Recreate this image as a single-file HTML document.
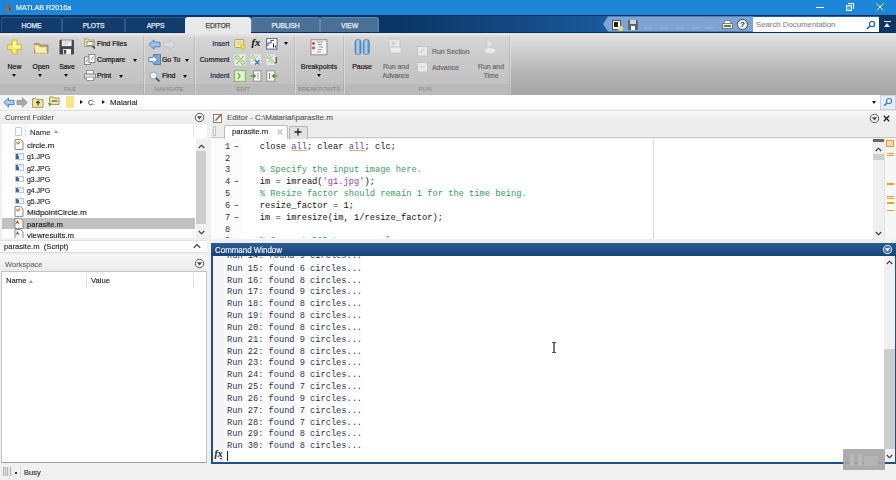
<!DOCTYPE html>
<html>
<head>
<meta charset="utf-8">
<title>MATLAB R2016a</title>
<style>
html,body{margin:0;padding:0;}
body{width:896px;height:480px;overflow:hidden;background:#f0f0f0;position:relative;font-family:"Liberation Sans",sans-serif;font-size:8px;color:#1a1a1a;}
div,span,svg{position:absolute;box-sizing:border-box;}
.t{white-space:nowrap;line-height:10px;-webkit-text-stroke:.12px currentColor;}
/* title */
#title{left:0;top:0;width:896px;height:16px;background:#1e86d9;}
#title .t{left:15.8px;top:2.8px;color:#fff;font-size:8px;transform:scaleX(.895);transform-origin:0 0;}
/* tab strip */
#tabs{left:0;top:15px;width:896px;height:18px;background:linear-gradient(90deg,#0b3565 0%,#0b3565 44%,#1a5a9c 68%,#2266aa 100%);border-top:1px solid #0a2f57;border-bottom:1px solid #0a2f57;}
.tab{top:1px;height:15px;border:1px solid #2e5886;border-bottom:none;border-radius:3px 3px 0 0;background:#113c6c;color:#e4ecf5;text-align:center;font-size:6.8px;line-height:15px;-webkit-text-stroke:.25px currentColor;letter-spacing:-.12px;}
.tab.lt{background:#4a7098;border-color:#6288ad;color:#e8eef5;}
.tab.act{background:#e9e9e9;border-color:#e9e9e9;color:#444;height:18px;}
/* toolstrip */
#strip{left:0;top:34px;width:896px;height:61px;background:linear-gradient(180deg,#e3e3e3 0%,#cfcfcf 25%,#b7b7b7 60%,#a4a4a4 100%);}
#stripL{left:0;top:0;width:510px;height:61px;background:linear-gradient(180deg,#e6e6e6 0%,#d6d6d6 6%,#cdcdcd 30%,#c2c2c2 80%,#bbbbbb 100%);}
#stripLab{left:0;top:50px;width:510px;height:11px;background:#bababa;}
.sep{top:2px;height:58px;background:rgba(150,150,150,.3);border-right:1px solid rgba(255,255,255,.45);width:2px;}
.sl{top:51px;color:#858585;font-size:5.95px;text-align:center;line-height:9px;}
.bl{font-size:6.9px;color:#111;-webkit-text-stroke:.2px currentColor;text-align:center;line-height:9.5px;}
.gr{color:#6a6a6a;}
.arr{width:0;height:0;border-left:2.9px solid transparent;border-right:2.9px solid transparent;border-top:3.4px solid #111;margin-left:-.4px;}
/* address bar */
#addr{left:0;top:95px;width:896px;height:16px;background:#f4f4f4;border-bottom:1px solid #e3e3e3;}
#addrf{left:62px;top:0;width:818px;height:14px;background:#fff;}
/* panels */
.ph{background:linear-gradient(180deg,#f7f7f7,#ebebeb);color:#555;font-size:7.6px;}
.code{font-family:"Liberation Mono",monospace;font-size:8.67px;white-space:pre;line-height:11.85px;}
.fn{font-size:8px;color:#111;margin-top:.9px;}
.img{left:15px;width:8.5px;height:6.5px;background:linear-gradient(90deg,#3d6486 0%,#4a7396 45%,#eef2f6 46%,#fff 100%);border:1px solid #b9c7d6;}
.img:after{content:"";position:absolute;left:2px;top:0;width:4.5px;height:1.5px;background:#e4ebf2;}
.om{left:887px;width:7px;height:1px;background:#f0a020;}
</style>
</head>
<body>

<!-- title bar -->
<div id="title">
  <svg style="left:4.2px;top:2.6px" width="7.4" height="9.6" viewBox="0 0 9 10" preserveAspectRatio="none"><path d="M0.3 6.5 L3 5 L5.2 0.6 L8.6 8.8 L6.2 6.8 L4.2 9.3 L2.6 7.2 Z" fill="#d9541e"/><path d="M5.2 0.6 L8.6 8.8 L6.4 6.6 Z" fill="#8a1c10"/><path d="M0.3 6.5 L3 5 L3.8 6 L2.6 7.2 Z" fill="#4a7fc0"/></svg>
  <div class="t">MATLAB R2016a</div>
  <div style="left:816px;top:7px;width:8px;height:1px;background:#fff"></div>
  <div style="left:846px;top:5px;width:6px;height:6px;border:1px solid #fff;background:#5aa6e4"></div>
  <div style="left:848px;top:3px;width:6px;height:6px;border-top:1px solid #fff;border-right:1px solid #fff"></div>
  <svg style="left:875.5px;top:3px" width="8" height="8" viewBox="0 0 8 8"><path d="M0.5 0.5 L7.5 7.5 M7.5 0.5 L0.5 7.5" stroke="#fff" stroke-width="1"/></svg>
</div>

<!-- tab strip -->
<div id="tabs">
  <div class="tab" style="left:1px;width:61px">HOME</div>
  <div class="tab" style="left:62px;width:63px">PLOTS</div>
  <div class="tab" style="left:125px;width:61px">APPS</div>
  <div class="tab act" style="left:185px;width:66px">EDITOR</div>
  <div class="tab lt" style="left:251px;width:69px">PUBLISH</div>
  <div class="tab lt" style="left:320px;width:59px">VIEW</div>
  <!-- quick access -->
  <svg style="left:603px;top:0" width="150" height="16" viewBox="0 0 150 16"><path d="M0 8 L5 0.5 L150 0.5 L150 15.5 L5 15.5 Z" fill="#7fa4d1"/></svg>
  <div style="left:612px;top:4px;width:9px;height:10px;background:#fff;border:1px solid #555"></div>
  <div style="left:614px;top:6px;width:4px;height:5px;background:#222"></div>
  <div style="left:618px;top:10px;width:5px;height:5px;border-radius:3px;background:#e8e070"></div>
  <div style="left:628px;top:4px;width:10px;height:10px;background:#5d6470;border-radius:1px"></div>
  <div style="left:630px;top:4px;width:6px;height:4px;background:#c9d3e0"></div>
  <div style="left:631px;top:10px;width:4px;height:4px;background:#fff"></div>
  <div style="left:644px;top:11px;width:8px;height:2px;background:#92b0d6"></div>
  <div style="left:660px;top:11px;width:8px;height:2px;background:#92b0d6"></div>
  <div style="left:676px;top:11px;width:8px;height:2px;background:#92b0d6"></div>
  <div style="left:692px;top:11px;width:8px;height:2px;background:#92b0d6"></div>
  <div style="left:706px;top:11px;width:8px;height:2px;background:#92b0d6"></div>
  <div style="left:722px;top:7px;width:11px;height:6px;background:#f2f2f2;border:1px solid #777"></div>
  <div style="left:724px;top:4px;width:7px;height:4px;background:#fff;border:1px solid #888"></div>
  <div style="left:724px;top:9px;width:7px;height:2px;background:#4c8a4c"></div>
  <div style="left:737px;top:3px;width:11px;height:11px;border-radius:6px;background:#f4f6f8;border:1px solid #3a4a5c;color:#223;font-size:8px;font-weight:bold;line-height:9.5px;text-align:center">?</div>
  <!-- search -->
  <div style="left:753px;top:1px;width:126px;height:15px;background:#fff"></div>
  <div class="t" style="left:756px;top:3.5px;color:#8a8a8a;font-size:7.8px">Search Documentation</div>
  <svg style="left:866px;top:4px" width="10" height="10" viewBox="0 0 10 10"><circle cx="6" cy="4" r="2.6" fill="none" stroke="#2b66a8" stroke-width="1.3"/><path d="M4 6 L1 9" stroke="#2b66a8" stroke-width="1.6"/></svg>
  <div style="left:879px;top:0;width:17px;height:16px;background:#0f3560"></div>
  <div style="left:884px;top:5px;width:7px;height:1px;background:#dfe7f0"></div>
  <div style="left:884px;top:7px;width:0;height:0;border-left:3.5px solid transparent;border-right:3.5px solid transparent;border-bottom:4px solid #dfe7f0"></div>
</div>

<!-- toolstrip -->
<div style="left:0;top:33px;width:896px;height:2px;background:#e6e6e6"></div>
<div id="strip">
  <div id="stripL"></div>
  <div id="stripLab"></div>
  <div class="sep" style="left:143px"></div>
  <div class="sep" style="left:194px"></div>
  <div class="sep" style="left:294px"></div>
  <div class="sep" style="left:343px"></div>
  <div class="sep" style="left:509px"></div>
  <div class="sl" style="left:50px;width:40px">FILE</div>
  <div class="sl" style="left:144px;width:50px">NAVIGATE</div>
  <div class="sl" style="left:223px;width:40px">EDIT</div>
  <div class="sl" style="left:295px;width:48px">BREAKPOINTS</div>
  <div class="sl" style="left:405px;width:40px">RUN</div>

  <!-- FILE -->
  <svg style="left:6px;top:5px" width="17" height="16" viewBox="0 0 17 16"><path d="M6 1 H11 V5.7 H15.6 V10.6 H11 V15 H6 V10.6 H1.4 V5.7 H6 Z" fill="#f3e868" stroke="#cdb93c" stroke-width="1" stroke-linejoin="round"/><path d="M7 2.2 H10 V6.8 H14.5 V8.6 H7 Z" fill="#fdf9b8"/></svg>
  <svg style="left:33px;top:8px" width="16" height="12" viewBox="0 0 16 12"><path d="M1.5 1.5 H6 L7.3 3 H15 V11 H1.5 Z" fill="#b9a056" stroke="#a08a44" stroke-width=".8"/><path d="M1.2 3.2 H5.5 L6.8 5 H13.3 L14 11.2 H2.6 Z" fill="#f6eeb4" stroke="#d6c478" stroke-width=".7"/></svg>
  <svg style="left:58px;top:5px" width="17" height="16" viewBox="0 0 17 16"><rect x="1.5" y="0.8" width="14.5" height="14.7" rx="1" fill="#46484d"/><rect x="3.8" y="1.3" width="9.8" height="5.8" fill="#f1f3f5"/><path d="M5 3 H12 M5 5 H10" stroke="#b9bec6" stroke-width=".8"/><rect x="5" y="10" width="8" height="5.5" fill="#fafafa"/><rect x="5.8" y="10.8" width="2.4" height="4" fill="#46484d"/></svg>
  <div class="bl" style="left:0;top:27.5px;width:29px">New</div>
  <div class="bl" style="left:26px;top:27.5px;width:30px">Open</div>
  <div class="bl" style="left:52px;top:27.5px;width:30px">Save</div>
  <div class="arr" style="left:12px;top:40px"></div>
  <div class="arr" style="left:38.5px;top:40px"></div>
  <div class="arr" style="left:64.5px;top:40px"></div>

  <svg style="left:84px;top:4px" width="12" height="11" viewBox="0 0 12 11"><path d="M0.5 1 H4 L5 2 H10.5 V8.5 H0.5 Z" fill="#efe3a0" stroke="#b9a55a"/><rect x="3" y="3.5" width="6" height="4" fill="#fff" stroke="#5a7fb0" stroke-width=".8"/><path d="M8.5 8 L11 10.5" stroke="#334" stroke-width="1.4"/></svg>
  <svg style="left:84px;top:20px" width="12" height="11" viewBox="0 0 12 11"><rect x="0.5" y="3" width="6" height="7.5" fill="#f4f4f4" stroke="#888"/><rect x="5" y="0.5" width="6" height="8" fill="#fff" stroke="#888"/><path d="M2 8 L4.5 4.5 M7 6 L9.5 2.5" stroke="#7090c0" stroke-width="1"/></svg>
  <svg style="left:84px;top:36px" width="12" height="11" viewBox="0 0 12 11"><rect x="2.5" y="0.5" width="7" height="4" fill="#fff" stroke="#999"/><rect x="0.5" y="4" width="11" height="4.5" rx="1" fill="#e6e6e6" stroke="#777"/><rect x="2.5" y="7" width="7" height="3.5" fill="#fff" stroke="#999"/></svg>
  <div class="t bl" style="left:97px;top:5px;text-align:left">Find Files</div>
  <div class="t bl" style="left:97px;top:21px;text-align:left">Compare</div>
  <div class="t bl" style="left:97px;top:37px;text-align:left">Print</div>
  <div class="arr" style="left:133.3px;top:24.5px"></div>
  <div class="arr" style="left:119.2px;top:40.5px"></div>

  <!-- NAVIGATE -->
  <svg style="left:148px;top:5px" width="13" height="11" viewBox="0 0 13 11"><path d="M1 5.5 L6 0.8 V3.2 H12 V7.8 H6 V10.2 Z" fill="#9cc4ea" stroke="#4f86c0" stroke-width="1" stroke-linejoin="round"/></svg>
  <svg style="left:163px;top:5px" width="13" height="11" viewBox="0 0 13 11"><path d="M12 5.5 L7 0.8 V3.2 H1 V7.8 H7 V10.2 Z" fill="#dcdcdc" stroke="#c2c2c2" stroke-width="1" stroke-linejoin="round"/></svg>
  <svg style="left:148px;top:20px" width="13" height="11" viewBox="0 0 13 11"><rect x="6" y="0.5" width="6.5" height="10" fill="#7fa6d4" stroke="#4a6f9c" stroke-width=".8"/><path d="M0.8 3.5 H5 V1.5 L9.5 5.5 L5 9.5 V7.5 H0.8 Z" fill="#eaf2fb" stroke="#4f86c0" stroke-width=".9" stroke-linejoin="round"/></svg>
  <svg style="left:149px;top:37px" width="12" height="11" viewBox="0 0 12 11"><circle cx="4.5" cy="4.5" r="3.5" fill="#eef5fc" stroke="#8aa2be" stroke-width="1"/><path d="M7 7 L10.5 10.3" stroke="#445a78" stroke-width="1.8"/></svg>
  <div class="t bl" style="left:162px;top:21px;text-align:left">Go To</div>
  <div class="t bl" style="left:162px;top:37px;text-align:left">Find</div>
  <div class="arr" style="left:185.7px;top:24.5px"></div>
  <div class="arr" style="left:183.7px;top:40.5px"></div>

  <!-- EDIT -->
  <div class="t bl" style="left:190px;top:5px;width:39.5px;text-align:right;color:#1d2d55">Insert</div>
  <div class="t bl" style="left:190px;top:21px;width:39.5px;text-align:right;color:#1a1a1a">Comment</div>
  <div class="t bl" style="left:190px;top:37px;width:39.5px;text-align:right;color:#1d2d55">Indent</div>
  <svg style="left:234px;top:4px" width="12" height="12" viewBox="0 0 12 12"><rect x="0.7" y="1.5" width="9" height="8" rx="1" fill="#f2eab0" stroke="#b5a65a" stroke-width="1"/><path d="M2.5 4 H8 M2.5 6 H8" stroke="#c9bd7a" stroke-width=".8"/><circle cx="9" cy="9" r="2.3" fill="#f0dc4a" stroke="#c4ac2a" stroke-width=".6"/></svg>
  <div class="t" style="left:251.5px;top:3px;font-family:'Liberation Serif',serif;font-style:italic;font-weight:bold;font-size:10.5px;color:#111;line-height:12px">fx</div>
  <svg style="left:266px;top:4px" width="12" height="12" viewBox="0 0 12 12"><rect x="0.6" y="0.6" width="10.5" height="10.5" fill="#fdfdfd" stroke="#5a6a82" stroke-width="1"/><path d="M2 8 L2 5 L5 5 L5 2.5 L8 2.5" stroke="#3c66a6" stroke-width="1.2" fill="none"/><path d="M7.5 5.5 V9.5 M9.5 7.5 V9.5" stroke="#222" stroke-width="1"/></svg>
  <div class="arr" style="left:284px;top:8px"></div>
  <svg style="left:234px;top:20px" width="12" height="12" viewBox="0 0 12 12"><rect x="0.5" y="0.5" width="11" height="11" fill="#eef6e6" opacity=".85"/><path d="M9.5 2 L2.5 10" stroke="#7cb84a" stroke-width="1.1"/><circle cx="3.3" cy="3.5" r="1.8" fill="none" stroke="#7cb84a" stroke-width="1"/><circle cx="8.7" cy="8.5" r="1.8" fill="none" stroke="#7cb84a" stroke-width="1"/></svg>
  <svg style="left:250px;top:20px" width="12" height="12" viewBox="0 0 12 12"><rect x="0.5" y="0.5" width="10" height="10" fill="#f0f5ec" opacity=".8"/><path d="M8 1.5 L2.5 8" stroke="#9cc87a" stroke-width="1"/><circle cx="3" cy="3" r="1.5" fill="none" stroke="#9cc87a" stroke-width="1"/><path d="M5 6 L9.5 10.5 M9.5 6 L5 10.5" stroke="#3b78b8" stroke-width="1.5"/></svg>
  <svg style="left:266px;top:20px" width="12" height="12" viewBox="0 0 12 12"><rect x="0.5" y="0.5" width="8.5" height="10.5" fill="#f0f5ec" opacity=".8"/><path d="M7 1.5 L2 8.5" stroke="#9cc87a" stroke-width="1"/><circle cx="2.8" cy="3" r="1.5" fill="none" stroke="#9cc87a" stroke-width="1"/><circle cx="6.2" cy="7.5" r="1.5" fill="none" stroke="#9cc87a" stroke-width="1"/><path d="M10.3 3 V9 H8.5" stroke="#444" stroke-width="1" fill="none"/></svg>
  <svg style="left:234px;top:36px" width="12" height="12" viewBox="0 0 12 12"><rect x="0.6" y="0.6" width="10.8" height="10.8" fill="#e2f2d4" stroke="#86bc5a" stroke-width="1.1"/><path d="M3.8 3 L6 6 L3.8 9" stroke="#5aa434" stroke-width="1.2" fill="none"/></svg>
  <svg style="left:250px;top:36px" width="12" height="12" viewBox="0 0 12 12"><rect x="3.5" y="0.8" width="7.5" height="10.4" fill="#f6f6f6" stroke="#8a8a8a" stroke-width=".9"/><path d="M0.5 6 H5 M3.2 4 L5.4 6 L3.2 8" stroke="#5aa22e" stroke-width="1.3" fill="none"/><path d="M8 3 V9" stroke="#777" stroke-width="1" stroke-dasharray="1.5 1"/></svg>
  <svg style="left:266px;top:36px" width="12" height="12" viewBox="0 0 12 12"><rect x="0.8" y="0.8" width="8" height="10.4" fill="#f6f6f6" stroke="#8a8a8a" stroke-width=".9"/><path d="M11.5 6 H6.5 M8.6 4 L6.4 6 L8.6 8" stroke="#5aa22e" stroke-width="1.3" fill="none"/><path d="M3.5 3 V9" stroke="#777" stroke-width="1"/></svg>

  <!-- BREAKPOINTS -->
  <svg style="left:310px;top:5px" width="18" height="17" viewBox="0 0 18 17"><rect x="1" y="0.8" width="16" height="15" fill="#f4f4f4" stroke="#8d8d8d" stroke-width="1"/><circle cx="3.5" cy="4.5" r="1.4" fill="#d43a3a"/><circle cx="3.5" cy="9" r="1.4" fill="#d43a3a"/><path d="M7 3 H13 M8 5.5 H12 M9 8 H13 M8 10.5 H12 M7 13 H11" stroke="#9a9a9a" stroke-width="1"/></svg>
  <div class="bl" style="left:295px;top:27.5px;width:48px;color:#1c2410">Breakpoints</div>
  <div class="arr" style="left:317px;top:40px"></div>

  <!-- RUN -->
  <svg style="left:354px;top:5px" width="16" height="16" viewBox="0 0 16 16"><defs><linearGradient id="pg" x1="0" x2="1" y1="0" y2="0"><stop offset="0" stop-color="#3f84c0"/><stop offset=".45" stop-color="#bcdcf4"/><stop offset="1" stop-color="#3d7cb6"/></linearGradient></defs><rect x="1" y="0.5" width="6" height="15" rx="2.5" fill="url(#pg)" stroke="#4a7fae" stroke-width=".7"/><rect x="9.3" y="0.5" width="6" height="15" rx="2.5" fill="url(#pg)" stroke="#4a7fae" stroke-width=".7"/></svg>
  <div class="bl" style="left:344px;top:27.5px;width:36px;color:#1f1410">Pause</div>

  <svg style="left:387px;top:4px" width="16" height="17" viewBox="0 0 16 17"><rect x="2" y="1" width="11" height="9" fill="#e6e6e6" stroke="#c6c6c6"/><rect x="3" y="9" width="11" height="6" fill="#ececec" stroke="#c6c6c6"/><path d="M5 3 L9 5.5 L5 8 Z" fill="#cfcfcf"/></svg>
  <div class="bl gr" style="left:376px;top:27.5px;width:40px">Run and<br>Advance</div>
  <svg style="left:417px;top:12px" width="12" height="11" viewBox="0 0 12 11"><rect x="0.5" y="0.5" width="10" height="9.5" fill="#e9e9e9" stroke="#c2c2c2"/><path d="M3 7 L7 3" stroke="#cfcfcf" stroke-width="1.2"/></svg>
  <svg style="left:417px;top:28px" width="12" height="11" viewBox="0 0 12 11"><rect x="0.5" y="0.5" width="10" height="9.5" fill="#e9e9e9" stroke="#c2c2c2"/><path d="M3 5 H8" stroke="#cfcfcf" stroke-width="1.2"/></svg>
  <div class="t bl gr" style="left:432px;top:12.5px;text-align:left">Run Section</div>
  <div class="t bl gr" style="left:432px;top:28.5px;text-align:left">Advance</div>
  <svg style="left:482px;top:4px" width="16" height="17" viewBox="0 0 16 17"><path d="M5 1 L12 6 L5 11 Z" fill="#e2e2e2" stroke="#cbcbcb"/><ellipse cx="8" cy="12.5" rx="6" ry="3.2" fill="#e9e9e9" stroke="#cdcdcd"/></svg>
  <div class="bl gr" style="left:471px;top:27.5px;width:40px">Run and<br>Time</div>
</div>

<!-- address bar -->
<div id="addr">
  <div id="addrf"></div>
  <svg style="left:3px;top:2px" width="12" height="11" viewBox="0 0 12 11"><path d="M0.8 5.5 L5.5 1 V3.4 H11 V7.6 H5.5 V10 Z" fill="#a4cbee" stroke="#4f86c0" stroke-width="1" stroke-linejoin="round"/></svg>
  <svg style="left:16px;top:2px" width="12" height="11" viewBox="0 0 12 11"><path d="M11.2 5.5 L6.5 1 V3.4 H1 V7.6 H6.5 V10 Z" fill="#a8a8a8" stroke="#9a9a9a" stroke-width="1" stroke-linejoin="round"/></svg>
  <svg style="left:32px;top:2px" width="12" height="11" viewBox="0 0 12 11"><path d="M0.6 1.5 H4 L5 2.6 H11 V10.3 H0.6 Z" fill="#efe6a8" stroke="#a89a50" stroke-width="1"/><path d="M6 8.5 V4.5 M4.3 6 L6 4.3 L7.7 6" stroke="#333" stroke-width="1.1" fill="none"/></svg>
  <svg style="left:47px;top:1px" width="13" height="12" viewBox="0 0 13 12"><path d="M2.5 1 H6 L7 2 H12 V8.5 H2.5 Z" fill="#efe6a8" stroke="#a89a50" stroke-width="1"/><path d="M4.5 5 H10.5" stroke="#444" stroke-width="1"/><path d="M0.8 7 L2.8 10.6 L5 7.6 Z" fill="#5aa832"/></svg>
  <div style="left:66px;top:1px;width:8px;height:12px;background:#f6e68a;border-radius:1px"></div>
  <div style="left:79.5px;top:5px;width:0;height:0;border-top:2.5px solid transparent;border-bottom:2.5px solid transparent;border-left:3px solid #111"></div>
  <div class="t" style="left:88px;top:2.5px;font-size:8px;color:#2a3560;transform:scaleX(0.870);transform-origin:0 50%">C:</div>
  <div style="left:101.5px;top:5px;width:0;height:0;border-top:2.5px solid transparent;border-bottom:2.5px solid transparent;border-left:3px solid #111"></div>
  <div class="t" style="left:110px;top:2.5px;font-size:8px;color:#222;transform:scaleX(0.983);transform-origin:0 50%">Malarial</div>
  <div class="arr" style="left:872px;top:6px"></div>
  <div style="left:880px;top:0;width:16px;height:15px;background:#e4ecf6;border:1px solid #c5d3e6"></div>
  <svg style="left:883px;top:2px" width="10" height="10" viewBox="0 0 10 10"><circle cx="6" cy="4" r="2.5" fill="#fff" stroke="#3f78ba" stroke-width="1.2"/><path d="M4 6 L1.2 8.8" stroke="#3f78ba" stroke-width="1.6"/></svg>
</div>

<!-- LEFT: Current Folder -->
<div id="cf" style="left:0;top:111px;width:210px;height:129px;background:#f0f0f0">
  <div class="ph" style="left:1px;top:0;width:208px;height:13px"></div>
  <div class="t" style="left:5px;top:2.2px;font-size:8px;color:#505050;transform:scaleX(0.950);transform-origin:0 50%">Current Folder</div>
  <svg style="left:193.5px;top:0.8px" width="11" height="11" viewBox="0 0 11 11"><circle cx="5.5" cy="5.5" r="4.2" fill="none" stroke="#5c5c5c" stroke-width="1"/><path d="M2.9 4.2 H8.1 L5.5 7.6 Z" fill="#4a4a4a"/></svg>
  
  <!-- list -->
  <div style="left:2px;top:13px;width:205px;height:114px;background:#fff"></div>
  <div style="left:25px;top:14px;width:1px;height:12px;background:#e6e6e6"></div>
  <div style="left:193px;top:14px;width:1px;height:12px;background:#e6e6e6"></div>
  <div style="left:15px;top:16px;width:7px;height:9px;background:#fff;border:1px solid #c9c9c9;border-radius:1px"></div>
  <div class="t" style="left:30px;top:16.5px;font-size:8px;color:#1c3a20;transform:scaleX(0.965);transform-origin:0 50%">Name</div>
  <div style="left:53.5px;top:19px;width:0;height:0;border-left:2.5px solid transparent;border-right:2.5px solid transparent;border-bottom:3px solid #999"></div>
  <div style="left:2px;top:107.3px;width:193px;height:10.8px;background:#c1c1c1"></div>
  <!-- scrollbar -->
  <div style="left:196px;top:28px;width:10.5px;height:99px;background:#f0f0f0"></div>
  <div style="left:196px;top:40px;width:10px;height:72.5px;background:#cdcdcd"></div>
  <svg style="left:198px;top:33px" width="7" height="5" viewBox="0 0 7 5"><path d="M0.8 4 L3.5 1.2 L6.2 4" stroke="#333" stroke-width="1.1" fill="none"/></svg>
  <svg style="left:198px;top:119px" width="7" height="5" viewBox="0 0 7 5"><path d="M0.8 1 L3.5 3.8 L6.2 1" stroke="#333" stroke-width="1.1" fill="none"/></svg>
</div>
<div id="files" style="left:0;top:111px;width:200px;height:127px;overflow:hidden">
  <!-- icons + names -->
  <svg style="left:14px;top:28px" width="10" height="11" viewBox="0 0 10 11"><path d="M1 0.6 H6.5 L9 3 V10.4 H1 Z" fill="#fff" stroke="#7a7a7a" stroke-width=".9"/><path d="M2.5 3 L4 5 L6 2.5" stroke="#d66a1e" stroke-width="1.2" fill="none"/></svg>
  <div class="t fn" style="left:27px;top:29px;transform:scaleX(0.990);transform-origin:0 50%">circle.m</div>
  <div class="img" style="top:42px"></div><div class="t fn" style="left:27px;top:40.5px;transform:scaleX(0.865);transform-origin:0 50%">g1.JPG</div>
  <div class="img" style="top:53px"></div><div class="t fn" style="left:27px;top:52px;transform:scaleX(0.865);transform-origin:0 50%">g2.JPG</div>
  <div class="img" style="top:64.5px"></div><div class="t fn" style="left:27px;top:63px;transform:scaleX(0.865);transform-origin:0 50%">g3.JPG</div>
  <div class="img" style="top:75.5px"></div><div class="t fn" style="left:27px;top:74px;transform:scaleX(0.865);transform-origin:0 50%">g4.JPG</div>
  <div class="img" style="top:86.5px"></div><div class="t fn" style="left:27px;top:85px;transform:scaleX(0.865);transform-origin:0 50%">g5.JPG</div>
  <svg style="left:14px;top:95px" width="10" height="11" viewBox="0 0 10 11"><path d="M1 0.6 H6.5 L9 3 V10.4 H1 Z" fill="#fff" stroke="#7a7a7a" stroke-width=".9"/><path d="M2.5 3 L4 5 L6 2.5" stroke="#d66a1e" stroke-width="1.2" fill="none"/></svg>
  <div class="t fn" style="left:27px;top:96.5px;transform:scaleX(1.000);transform-origin:0 50%">MidpointCircle.m</div>
  <svg style="left:14px;top:107px" width="10" height="11" viewBox="0 0 10 11"><path d="M1 0.6 H6.5 L9 3 V10.4 H1 Z" fill="#fff" stroke="#7a7a7a" stroke-width=".9"/><path d="M1.5 6 L3.5 2 L5.5 6.5 L3.5 5 Z" fill="#c43a1e"/></svg>
  <div class="t fn" style="left:27px;top:108px;transform:scaleX(0.965);transform-origin:0 50%">parasite.m</div>
  <svg style="left:14px;top:118px" width="10" height="11" viewBox="0 0 10 11"><path d="M1 0.6 H6.5 L9 3 V10.4 H1 Z" fill="#fff" stroke="#7a7a7a" stroke-width=".9"/><path d="M1.5 6 L3.5 2 L5.5 6.5 L3.5 5 Z" fill="#c43a1e"/></svg>
  <div class="t fn" style="left:27px;top:119.5px;transform:scaleX(0.970);transform-origin:0 50%">viewresults.m</div>
</div>

<!-- details -->
<div style="left:0;top:240px;width:207px;height:13px;background:#fff;border-top:1px solid #e2e2e2;border-bottom:1px solid #dcdcdc"></div>
<div class="t" style="left:4px;top:241.6px;font-size:8px;color:#1a1a1a;transform:scaleX(0.953);transform-origin:0 50%">parasite.m&nbsp; (Script)</div>
<svg style="left:192.6px;top:243px" width="8" height="6" viewBox="0 0 8 6"><path d="M0.8 4.8 L4 1.5 L7.2 4.8" stroke="#333" stroke-width="1.2" fill="none"/></svg>

<!-- workspace -->
<div class="ph" style="left:1px;top:255px;width:206px;height:16px"></div>
<div class="t" style="left:5px;top:260px;font-size:8px;color:#666;transform:scaleX(0.942);transform-origin:0 50%">Workspace</div>
<svg style="left:193.5px;top:258.3px" width="11" height="11" viewBox="0 0 11 11"><circle cx="5.5" cy="5.5" r="4.2" fill="none" stroke="#5c5c5c" stroke-width="1"/><path d="M2.9 4.2 H8.1 L5.5 7.6 Z" fill="#4a4a4a"/></svg>

<div style="left:1px;top:270.6px;width:206px;height:192px;background:#fff;border:1px solid #c4c4c4;border-bottom-color:#9c9c9c"></div>
<div style="left:86px;top:273px;width:1px;height:15px;background:#e2e2e2"></div>
<div style="left:193px;top:273px;width:1px;height:15px;background:#e2e2e2"></div>
<div class="t" style="left:5.5px;top:276px;font-size:8px;color:#222;transform:scaleX(0.965);transform-origin:0 50%">Name</div>
<div style="left:29px;top:279.5px;width:0;height:0;border-left:2.5px solid transparent;border-right:2.5px solid transparent;border-bottom:3px solid #999"></div>
<div class="t" style="left:90.5px;top:276px;font-size:8px;color:#222;transform:scaleX(0.957);transform-origin:0 50%">Value</div>

<!-- status bar -->
<div style="left:0;top:463px;width:896px;height:17px;background:#f0f0f0"></div>
<div style="left:3px;top:467px;width:9px;height:9px;background:repeating-linear-gradient(90deg,#b5b5b5 0,#b5b5b5 1px,#e6e6e6 1px,#e6e6e6 2.2px)"></div>
<div style="left:15px;top:472px;width:2px;height:2px;background:#333"></div>
<div style="left:20px;top:466px;width:1px;height:12px;background:#dcdcdc"></div>
<div class="t" style="left:23.5px;top:467.5px;font-size:8px;color:#222;transform:scaleX(0.935);transform-origin:0 50%">Busy</div>

<!-- EDITOR panel -->
<div class="ph" style="left:211px;top:111px;width:685px;height:13px"></div>
<svg style="left:213px;top:113px" width="10" height="10" viewBox="0 0 10 10"><rect x="0.5" y="1.5" width="8" height="8" fill="#fff" stroke="#777" stroke-width=".9"/><path d="M3 7 L8.5 1" stroke="#c0562a" stroke-width="1.6"/><path d="M2.2 8 L3.6 7.4 L2.8 6.6 Z" fill="#333"/></svg>
<div class="t" style="left:227px;top:112.5px;font-size:8px;color:#555;transform:scaleX(1.000);transform-origin:0 50%">Editor - C:\Malarial\parasite.m</div>
<svg style="left:869.0px;top:112.5px" width="11" height="11" viewBox="0 0 11 11"><circle cx="5.5" cy="5.5" r="4.2" fill="none" stroke="#5c5c5c" stroke-width="1"/><path d="M2.9 4.2 H8.1 L5.5 7.6 Z" fill="#4a4a4a"/></svg>

<svg style="left:883.2px;top:115px" width="7" height="7" viewBox="0 0 7 7"><path d="M0.8 0.8 L6.2 6.2 M6.2 0.8 L0.8 6.2" stroke="#222" stroke-width="1.3"/></svg>

<div style="left:211px;top:124px;width:685px;height:14px;background:#ececec;border-bottom:1px solid #c9c9c9"></div>
<div style="left:213px;top:126px;width:3px;height:10px;background:#fafafa;border:1px solid #c4c4c4"></div>
<div style="left:224px;top:125px;width:64px;height:14px;background:#fff;border:1px solid #bdbdbd;border-bottom:none;border-radius:2px 2px 0 0"></div>
<div class="t" style="left:231.5px;top:126.5px;font-size:8px;color:#222;transform:scaleX(0.968);transform-origin:0 50%">parasite.m</div>
<svg style="left:277px;top:129px" width="6" height="6" viewBox="0 0 6 6"><path d="M0.6 0.6 L5.4 5.4 M5.4 0.6 L0.6 5.4" stroke="#c2c2c2" stroke-width="1.4"/></svg>
<div style="left:288.5px;top:126px;width:19px;height:12.5px;background:#e2e2e2;border:1px solid #b4b4b4;border-bottom:none;border-radius:2px 2px 0 0"></div>
<svg style="left:294px;top:128px" width="8" height="8" viewBox="0 0 8 8"><path d="M4 0.5 V7.5 M0.5 4 H7.5" stroke="#222" stroke-width="1.3"/></svg>

<!-- editor body -->
<div style="left:211px;top:139px;width:685px;height:101px;background:#fff"></div>
<div style="left:211px;top:139px;width:30px;height:101px;background:#fbfbfb"></div>
<div style="left:653px;top:139px;width:1px;height:101px;background:#d8d8d8"></div>
<div id="lnum" class="code" style="left:225px;top:141.7px;color:#333;overflow:hidden;height:96.8px">1
2
3
4
5
6
7
8
9</div>
<div id="ldash" class="code" style="left:233.7px;top:141.7px;color:#222;overflow:hidden;height:96.8px">–
 
 
–
 
–
–
 
–</div>
<div id="code" class="code" style="font-size:8.72px;left:259.8px;top:141.7px;color:#111;overflow:hidden;height:96.8px">close <span class="s" style="position:static;color:#6a3fa0">all</span>; clear <span style="position:static;color:#6a3fa0">all</span>; clc;

<span style="position:static;color:#3c9a62">% Specify the input image here.</span>
im = imread(<span style="position:static;color:#9a3fa8">'g1.jpg'</span>);
<span style="position:static;color:#3c9a62">% Resize factor should remain 1 for the time being.</span>
resize_factor = 1;
im = imresize(im, 1/resize_factor);

<span style="position:static;color:#3c9a62">% Convert RGB to grayscale.</span></div>
<div style="left:291.5px;top:150.4px;width:15.5px;height:1px;background:#e6a684"></div>
<div style="left:349px;top:150.4px;width:15.5px;height:1px;background:#e6a684"></div>
<!-- editor scrollbars -->
<div style="left:873px;top:139px;width:11px;height:101px;background:#f0f0f0"></div>
<div style="left:873px;top:139px;width:11px;height:3px;background:#666"></div>
<div style="left:873px;top:154px;width:11px;height:6px;background:#cdcdcd"></div>
<svg style="left:875px;top:146.5px" width="7" height="5" viewBox="0 0 7 5"><path d="M0.8 4 L3.5 1.2 L6.2 4" stroke="#333" stroke-width="1.1" fill="none"/></svg>
<svg style="left:875px;top:231px" width="7" height="5" viewBox="0 0 7 5"><path d="M0.8 1 L3.5 3.8 L6.2 1" stroke="#333" stroke-width="1.1" fill="none"/></svg>
<div style="left:884px;top:139px;width:12px;height:101px;background:#f7f7f7;border-left:1px solid #e4e4e4"></div>
<div style="left:886px;top:139.5px;width:8px;height:7px;background:#f8d8a8;border:1px solid #e09a3a"></div>
<div class="om" style="top:152.5px"></div><div class="om" style="top:155px"></div>
<div class="om" style="top:183px;height:2px"></div>
<div class="om" style="top:195.5px"></div><div class="om" style="top:198px"></div><div class="om" style="top:202px;height:2px"></div>
<div class="om" style="top:209.5px"></div>

<!-- splitter -->
<div style="left:211px;top:238.6px;width:685px;height:4.4px;background:#f0f0f0"></div>

<!-- COMMAND WINDOW -->
<div style="left:211px;top:243px;width:685px;height:220.5px;background:#1d4f88"></div>
<div style="left:211px;top:243px;width:685px;height:13px;background:linear-gradient(180deg,#2a5c98,#174476)"></div>
<div class="t" style="left:215px;top:244.5px;font-size:8.3px;color:#fff;transform:scaleX(.955);transform-origin:0 50%">Command Window</div>
<svg style="left:881.5px;top:244.0px" width="11" height="11" viewBox="0 0 11 11"><circle cx="5.5" cy="5.5" r="4.2" fill="#4a7ab4" stroke="#e4ecf6" stroke-width="1"/><path d="M2.9 4.2 H8.1 L5.5 7.6 Z" fill="#fff"/></svg>

<div style="left:212.5px;top:256px;width:682px;height:206px;background:#fff"></div>
<div style="left:212.5px;top:256px;width:11.5px;height:206px;background:#f5f5f5"></div>
<div id="cw" class="code" style="left:227px;top:256px;width:300px;height:192px;overflow:hidden;color:#1f3050;line-height:11.83px"><div style="position:relative;top:-4px;white-space:pre"><span style="position:relative;top:-1px">Run 14: found 9 circles...</span>
Run 15: found 6 circles...
Run 16: found 8 circles...
Run 17: found 9 circles...
Run 18: found 8 circles...
Run 19: found 8 circles...
Run 20: found 8 circles...
Run 21: found 9 circles...
Run 22: found 8 circles...
Run 23: found 9 circles...
Run 24: found 8 circles...
Run 25: found 7 circles...
Run 26: found 9 circles...
Run 27: found 7 circles...
Run 28: found 7 circles...
Run 29: found 8 circles...
Run 30: found 8 circles...</div></div>
<div class="t" style="left:214.5px;top:448.5px;font-family:'Liberation Serif',serif;font-style:italic;font-weight:bold;font-size:9.5px;color:#222;line-height:11px">fx</div>
<div style="left:219.5px;top:458px;width:0;height:0;border-left:1.5px solid transparent;border-right:1.5px solid transparent;border-top:2px solid #222"></div>
<div style="left:227px;top:450.5px;width:1px;height:10px;background:#222"></div>
<!-- cw scrollbar -->
<div style="left:884px;top:256px;width:10.5px;height:206px;background:#f0f0f0"></div>
<div style="left:884px;top:349px;width:10.5px;height:100px;background:#cdcdcd"></div>
<svg style="left:885.7px;top:260px" width="7" height="5" viewBox="0 0 7 5"><path d="M0.8 4 L3.5 1.2 L6.2 4" stroke="#333" stroke-width="1.1" fill="none"/></svg>
<svg style="left:885.7px;top:454px" width="7" height="5" viewBox="0 0 7 5"><path d="M0.8 1 L3.5 3.8 L6.2 1" stroke="#333" stroke-width="1.1" fill="none"/></svg>

<!-- I-beam cursor -->
<div style="left:553.4px;top:342px;width:1.3px;height:10.5px;background:#777"></div>
<div style="left:551.7px;top:342px;width:4.7px;height:1px;background:#555"></div>
<div style="left:551.7px;top:351.7px;width:4.7px;height:1px;background:#555"></div>

<!-- watermark -->
<div style="left:843px;top:449px;width:42px;height:20.5px;background:#a6a6a6;opacity:.93;filter:blur(.6px);border-radius:1px"></div>
<div style="left:850px;top:454px;width:4px;height:12px;background:#b9b9b9"></div>
<div style="left:858px;top:454px;width:4px;height:12px;background:#b9b9b9"></div>
<div style="left:864px;top:456px;width:14px;height:10px;background:#b4b4b4"></div>

</body>
</html>
